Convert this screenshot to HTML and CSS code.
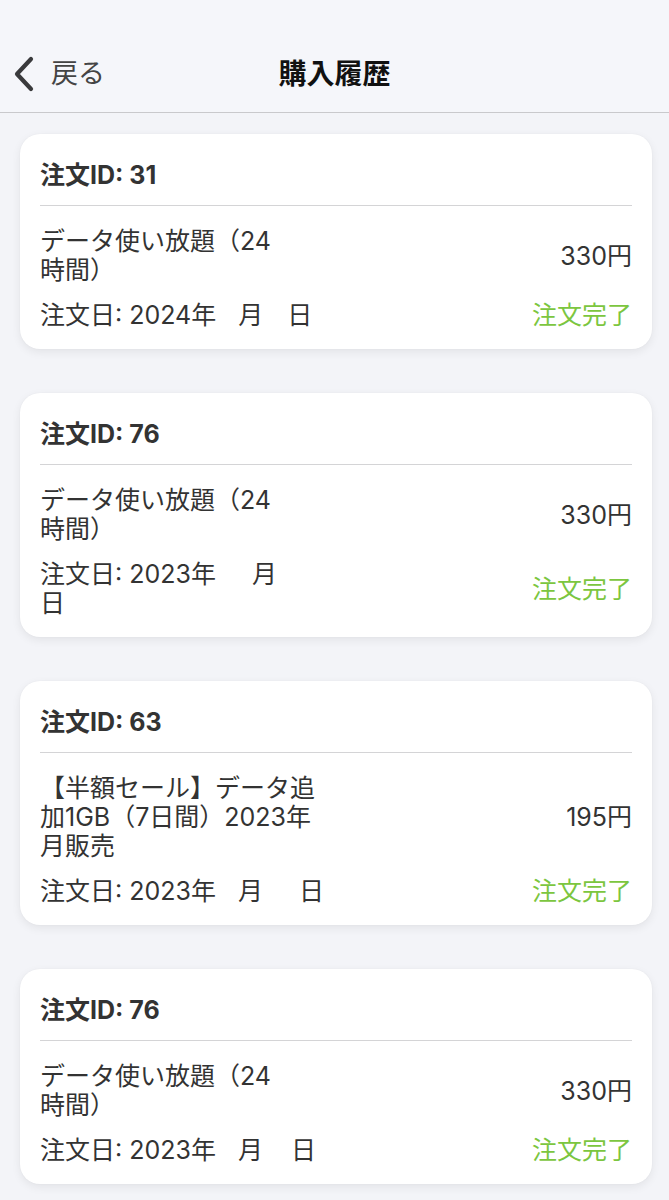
FILE: index.html
```html
<!DOCTYPE html>
<html lang="ja">
<head>
<meta charset="utf-8">
<title>購入履歴</title>
<link rel="stylesheet" href="styles.css">
</head>
<body>
<header class="nav">
  <div class="nav-row">
    <a class="back" href="#">
      <svg class="chev" width="24" height="36" viewBox="0 0 24 36" aria-hidden="true">
        <polyline points="19,3 5,18 19,33" fill="none" stroke="#3a3a3c" stroke-width="4.2" stroke-linecap="round" stroke-linejoin="round"/>
      </svg>
      <span class="back-label">戻る</span>
    </a>
    <h1 class="title">購入履歴</h1>
    <span class="spacer"></span>
  </div>
</header>

<main class="list">
  <article class="card">
    <div class="card-id">注文ID: 31</div>
    <hr class="divider">
    <div class="row product">
      <div class="left">データ使い放題（24<span class="keep">時間）</span></div>
      <div class="right price">330円</div>
    </div>
    <div class="row meta">
      <div class="left">注文日: 2024年<span class="mask m22"></span>月<span class="mask m24"></span>日</div>
      <div class="right status">注文完了</div>
    </div>
  </article>

  <article class="card">
    <div class="card-id">注文ID: 76</div>
    <hr class="divider">
    <div class="row product">
      <div class="left">データ使い放題（24<span class="keep">時間）</span></div>
      <div class="right price">330円</div>
    </div>
    <div class="row meta">
      <div class="left">注文日: 2023年<span class="mask m36"></span>月<span class="mask m36"></span>日</div>
      <div class="right status">注文完了</div>
    </div>
  </article>

  <article class="card">
    <div class="card-id">注文ID: 63</div>
    <hr class="divider">
    <div class="row product">
      <div class="left">【半額セール】データ追加1GB（7日間）2023年<span class="mask m14"></span>月販売</div>
      <div class="right price">195円</div>
    </div>
    <div class="row meta">
      <div class="left">注文日: 2023年<span class="mask m22"></span>月<span class="mask m36"></span>日</div>
      <div class="right status">注文完了</div>
    </div>
  </article>

  <article class="card">
    <div class="card-id">注文ID: 76</div>
    <hr class="divider">
    <div class="row product">
      <div class="left">データ使い放題（24<span class="keep">時間）</span></div>
      <div class="right price">330円</div>
    </div>
    <div class="row meta">
      <div class="left">注文日: 2023年<span class="mask m22"></span>月<span class="mask m28"></span>日</div>
      <div class="right status">注文完了</div>
    </div>
  </article>
</main>
</body>
</html>
```

FILE: styles.css
```css
* { box-sizing: border-box; }

html, body {
  margin: 0;
  padding: 0;
  background: #f3f4f8;
  color: #333333;
  font-family: Inter, "Noto Sans CJK JP", "Noto Sans", sans-serif;
}

.nav {
  padding-top: 35px;
  border-bottom: 1px solid #c9c9cc;
  background: #f5f6fa;
}

.nav-row {
  display: grid;
  grid-template-columns: 1fr auto 1fr;
  align-items: center;
  height: 77px;
}

.back {
  display: flex;
  align-items: center;
  gap: 15px;
  padding-left: 12px;
  color: #444444;
  text-decoration: none;
}

.chev { display: block; }

.back-label {
  font-size: 27px;
  line-height: 32px;
  font-weight: 400;
}

.title {
  margin: 0;
  font-size: 28px;
  line-height: 32px;
  font-weight: 700;
  color: #111111;
}

.list {
  display: flex;
  flex-direction: column;
  gap: 44px;
  padding: 21px 17px 40px 20px;
}

.card {
  background: #ffffff;
  border-radius: 20px;
  padding: 26px 20px 19px;
  box-shadow: 0 3px 10px rgba(0, 0, 0, 0.07), 0 0 2px rgba(0, 0, 0, 0.04);
}

.card-id {
  font-size: 25px;
  line-height: 30px;
  font-weight: 700;
  color: #333333;
}

.divider {
  margin: 15px 0 0;
  border: 0;
  height: 1px;
  background: #d4d4d6;
}

.row {
  display: flex;
  justify-content: space-between;
  align-items: center;
  font-size: 25px;
  line-height: 29px;
}

.product { margin-top: 21px; }
.meta { margin-top: 16px; }

.left {
  flex: 0 0 292px;
  width: 292px;
}

.keep { white-space: nowrap; }

.mask {
  display: inline-block;
  height: 20px;
  vertical-align: middle;
}
.m14 { width: 14px; }
.m22 { width: 22px; }
.m24 { width: 24px; }
.m28 { width: 28px; }
.m36 { width: 36px; }

.right {
  white-space: nowrap;
  text-align: right;
}

.price { color: #333333; }
.status { color: #7cc63f; }
```
